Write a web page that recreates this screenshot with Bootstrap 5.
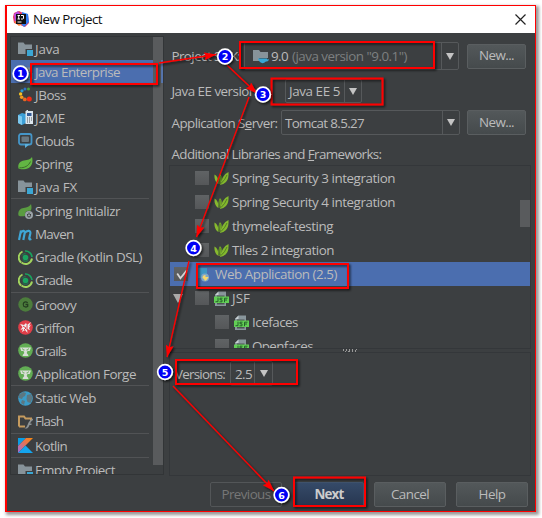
<!DOCTYPE html>
<html lang="en">
<head>
<meta charset="utf-8">
<meta name="viewport" content="width=device-width, initial-scale=1">
<title>New Project</title>
<link rel="stylesheet" href="https://cdn.jsdelivr.net/npm/bootstrap@5.3.0/dist/css/bootstrap.min.css">
<style>
body{width:542px;height:518px;overflow:hidden;background:#fff;font:13.4px/20px "Open Sans","Noto Sans",sans-serif;color:#bbb;padding:5px}
.dialog{width:531px;height:507px;border:1px solid #f00;border-left-width:2px;background:#3c3f41;box-shadow:2px 2px 3px 1px #999}
.titlebar{height:27px;background:#fff;color:#111;padding:0 9px 1px 6px}
.fit{white-space:nowrap;display:inline-block}
.sidebar{width:154px;height:439px;margin:3px 0 0 3px;border:1px solid #323537;overflow:hidden}
.types{width:143px}
.type-row{height:23px;padding-left:7px;gap:2px}
.type-row svg{width:15px;height:15px;flex:none}
.type-row.picked,.lib-row.picked{background:#4b6eaf}
.rule{height:1.6px;width:138px;background:linear-gradient(#515355 1px,transparent 1px)}
.thumb{width:10px;height:428px;background:#595b5d}
.thumb-sel{height:23px;background:#5675ad;margin-top:23px;width:2px}
.main-col{width:362px;margin:3px 0 0 5px}
.form-line{padding:0 5px 0 2.5px}
.combo{border:1px solid #56595b;border-radius:2px;background:#3c3f41}
.combo .drop{width:17px;border-left:1px solid #56595b}
.drop i{border:4.500px solid transparent;border-top:7px solid #c4c4c4;border-bottom:0}
.btn.dlg{--bs-btn-padding-x:0;--bs-btn-padding-y:0;font-size:13.4px;line-height:1;color:#bbb;border:1px solid #5a5e60;border-radius:2px;background:linear-gradient(#53585a,#454a4c);height:25px}
.btn.dlg.off{background:#3c3f41;color:#777;border-color:#535658}
.btn.dlg.main{background:linear-gradient(#354a68,#273650);border-color:#40536d;font-weight:700;color:#ccc}
.l1{width:72.5px}.l2{width:113.5px}.l3{width:109.5px}
.c1{width:215px;height:28px}.c2{width:77px;height:24px}.c3{width:179px;height:25px}
.c2 .fit,.c3 .fit{margin-left:-1px}
.line1{height:28px;margin-top:6px}.line2{height:24px;margin-top:9px}.line3{height:25px;margin-top:7px}.line4{height:20px;margin-top:9px}
.new{width:59px}
.sdk-ver{margin:0 4px 0 2px}
.text-sdk{color:#7d7f80}
.libs{height:184px;border:1px solid #34373a;overflow:hidden;margin-top:1px}
.lib-row{height:24px;gap:5px;padding-left:25px}
.lib-row svg{width:15px;height:15px;flex:none}
.lib-row>.fit{margin-left:-2px}
.lib-row.picked{padding-left:4px}
.lib-row.picked>svg{margin-left:4px}
.lib-row.deep{padding-left:45px}
.lib-row.parent{padding-left:3px}
.box{width:14px;height:14px;flex:none;background:linear-gradient(#606365,#555759)}
.twist{border:5px solid transparent;border-top:9px solid #aaa;border-bottom:0;margin-right:7px}
.lib-thumb{right:0;top:34px;width:10px;height:27px;background:#595b5d}
.grip{height:3px;width:15px;margin:0 auto;background:repeating-linear-gradient(110deg,#999 0 1px,transparent 1px 3px)}
.detail{height:124px;border:1px solid #34373a;padding:8px 0 0 5px}
.c5{width:43px;height:25px;margin-left:5px}
.c5 .drop{width:18px}
.actions{height:25px;margin-top:6px;padding-right:7px;gap:10px}
.w72{width:72px}.w70{width:70px}
.off{margin-right:2px}
.annot{position:absolute;left:0;top:0;pointer-events:none}
</style>
<script src="https://cdn.jsdelivr.net/npm/bootstrap@5.3.0/dist/js/bootstrap.bundle.min.js"></script>
</head>
<body>
<svg width="0" height="0" class="position-absolute">
<defs>
<linearGradient id="kg" x1="0" y1="1" x2="1" y2="0"><stop offset="0" stop-color="#9c6ade"/><stop offset=".6" stop-color="#e8744f"/><stop offset="1" stop-color="#f88909"/></linearGradient>
<symbol id="folder" viewBox="0 0 15 15"><path d="M0 1.500h5.500l1.500 2h7V8H7.500v5H0z" fill="#87939a"/><path d="M9 9h6v6H9z" fill="#3ba7d4"/></symbol>
<symbol id="jboss" viewBox="0 0 15 15"><circle cx="10.500" cy="2" r="1.500" fill="#4aa03c"/><circle cx="7" cy="2" r="1.500" fill="#2d72c4"/><circle cx="4" cy="3.800" r="1.600" fill="#2c9ad2"/><circle cx="2.600" cy="7" r="1.700" fill="#f5c224"/><circle cx="3.700" cy="10.300" r="1.800" fill="#f39a20"/><circle cx="6.800" cy="12.400" r="1.900" fill="#e86820"/><circle cx="11.300" cy="12" r="2.500" fill="#f32c16"/></symbol>
<symbol id="j2me" viewBox="0 0 15 15"><path d="M0 5l4-2 4 1v9l-4 2-4-2z" fill="#3c9fd6"/><path d="M0 5l4 1.500V15l-4-2z" fill="#7cc8ee"/><path d="M7.500 1h1V0H10v1h5v13H7.500z" fill="#dce6ee"/><path d="M9 3h4.500v3H9z" fill="#345b96"/><path d="M9 7.500h1v1H9zm2 0h1v1h-1zm2 0h1v1h-1zM9 9.500h1v1H9zm2 0h1v1h-1zm2 0h1v1h-1zM9 11.500h1v1H9zm2 0h1v1h-1z" fill="#555"/></symbol>
<symbol id="clouds" viewBox="0 0 15 15"><rect x="1" y="1" width="12.500" height="10.500" rx="2" fill="none" stroke="#4596c8" stroke-width="1.800"/><rect x="3.500" y="3.500" width="7.500" height="5.500" rx="1" fill="#6a7880"/><path d="M7 11v4l5-4z" fill="#5bb0dc"/></symbol>
<symbol id="spring" viewBox="0 0 15 15"><path d="M14 1c1.500 5.500-.5 11-6 12C5 13.400 2 13.500.5 12.500 -.5 8 2 5 6 4.500 10 4 12.500 3.500 14 1z" fill="#62b543"/><path d="M1.500 11.800c5 .2 9-1.800 11-6.300" stroke="#3b6d2a" fill="none"/></symbol>
<symbol id="init" viewBox="0 0 15 15"><path d="M13 0c1 4 .5 6-1 7-5-1-5 3-5 5-3 .5-5 .5-6.500-.5C-.5 7 2 4.500 5.500 4 9 3.500 12 2.500 13 0z" fill="#5a9c41"/><circle cx="11" cy="11" r="4" fill="#9aa3a8"/><path d="M9.500 10v1.500a1.500 1.500 0 003 0V10M11 8.500V11" stroke="#3c3f41" fill="none"/></symbol>
<symbol id="maven" viewBox="0 0 15 15"><path d="M1 13L3 3.500M2.700 6C4 3.500 7 3 6.700 6L5.300 13M6.800 6C8.300 3.500 13 2.500 12.300 6.500L11.300 11q-.3 2 2 1" fill="none" stroke="#3fa6d6" stroke-width="2.200"/></symbol>
<symbol id="gradle" viewBox="0 0 15 15"><path d="M4.500 1.500A6.500 6.500 0 003.200 12.500" fill="none" stroke="#a2d45e" stroke-width="1.900"/><path d="M3.500 12.500A6.500 6.500 0 0014 8.500" fill="none" stroke="#a2d45e" stroke-width="1.900"/><path d="M7 1A6.500 6.500 0 0114 7" fill="none" stroke="#19a45f" stroke-width="1.700"/><circle cx="7.500" cy="7.500" r="2.800" fill="#19a45f"/><path d="M4 5.500A4 4 0 017.500 3.500M4.500 10a4 4 0 006 0" fill="none" stroke="#178652"/></symbol>
<symbol id="groovy" viewBox="0 0 15 15"><circle cx="7.500" cy="7.500" r="7.200" fill="#4c7d3c"/><path d="M9.700 5.700Q7.500 4.200 5.800 5.700 4.500 7.500 5.800 9.300 7.800 10.700 9.700 9.300V7.500H7.500" fill="none" stroke="#243d20" stroke-width="1.300"/></symbol>
<symbol id="griffon" viewBox="0 0 15 15"><circle cx="7.500" cy="7.500" r="7.300" fill="#df3e48"/><path d="M2 4l4 1 2-2 1 2 4-3-2 4 2-1-2 3 1 2-3-1 .5 4-2.500-3-3 2 1-3-2.500 1 2-3z" fill="#eee"/><path d="M5 6l3 2-2 2M9 5v5" stroke="#df3e48" fill="none"/></symbol>
<symbol id="grails" viewBox="0 0 15 15"><circle cx="7.500" cy="7.500" r="7.300" fill="#62ad54"/><path d="M2 4.500h11L11.700 8H9.500L8.700 10l1.600 2v1H4.700v-1l1.600-2L5.500 8H3.300z" fill="#d8ddd6"/><path d="M4.500 5.500q.5 2 2 1.500M10.500 5.500q-.5 2-2 1.500" stroke="#62ad54" fill="none"/></symbol>
<symbol id="globe" viewBox="0 0 15 15"><circle cx="7.500" cy="7.500" r="7.300" fill="#3b9cc8"/><path d="M1 4l4-3 3 1-1 3-2 1-1 2-3-1zM9 4l4-1 1.500 4-2 5-3-1-1-3zM4 9l3 1-1 4-3-2z" fill="#5c7781"/></symbol>
<symbol id="flash" viewBox="0 0 15 15"><path d="M1 12.500v-10h5l1.500 2H13V7M1 12.500h6" fill="none" stroke="#c49a5e" stroke-width="2"/><path d="M15 4.500Q11 6 9.500 11 8.500 14 6.500 14.500H9Q11 13 11.500 11h2V9.500H12Q13 7 15 6z" fill="#8c9295"/></symbol>
<symbol id="kotlin" viewBox="0 0 15 15"><path d="M0 0h8L0 8z" fill="#0a9de5"/><path d="M8 0h7L0 15V8z" fill="url(#kg)"/><path d="M7.500 7.500L15 15H0z" fill="#14a5ee"/></symbol>
<symbol id="leaf" viewBox="0 0 15 15"><path d="M4.500 13C1 11 .2 7 .5 3.500q2 1 3 3.200Q4.700 9 4.500 13z" fill="#87b92f"/><path d="M5 13Q3.500 7 6 3 8.300 5 7.800 8 7 12 5 13z" fill="#75ad28"/><path d="M6 14Q6.500 10 9 6 11 2.500 14.500 1 15 8 12 11 9 14 6 14z" fill="#83b82e"/><path d="M5.400 12L6 5M7 12.500q4-3.500 6-8.500" stroke="#466f20" fill="none" stroke-width=".8"/></symbol>
<symbol id="jsf" viewBox="0 0 15 15"><path d="M4.500.5h7.500V15H1V4z" fill="#89969c"/><path d="M3 4.500h7.500v9H3z" fill="#4b5255"/><path d="M1 4L4.500.5V4z" fill="#c8d0d3"/><path d="M0 5.500h15v6.500H0z" fill="#62cf55"/><path d="M4 6.700v4H1.500M8.500 7.200H6v1.600h2v2H5.500M10.500 11.200V7.200h3M10.500 9H13" stroke="#25612b" stroke-width="1" fill="none"/></symbol>
</defs>
</svg>
<div class="dialog">
  <header class="titlebar d-flex align-items-center">
    <svg width="16" height="16" viewBox="0 0 16 16"><path d="M1 2l5-2 4 2 5 2 1 8-4 4-5-2-6-2L0 6z" fill="#f0365d"/><path d="M9 1l6 2 1 8-5 5-3-3z" fill="#2f7df4"/><path d="M1 3l4-3 3 4-6 8z" fill="#b84ae0"/><path d="M1 11l3-2 5 4-3 2z" fill="#f9803a"/><path d="M3 3h10v10H3z" fill="#111"/><path d="M4.500 4.500h2.500M5.700 4.500v3.500M4.500 8H7M8 4.500h2.500V7.500L9.500 8H8M4.500 11h4" stroke="#fff" fill="none"/></svg>
    <span class="fit ps-1 me-auto" data-w="69"><span class="ps-1 d-none"></span>New Project</span>
    <svg width="11" height="11" viewBox="0 0 11 11"><path d="M.5.5l10 10m0-10l-10 10" stroke="#222" stroke-width="1.200"/></svg>
  </header>
  <div class="d-flex">
    <aside class="sidebar d-flex">
      <div class="types">
        <div class="type-row d-flex align-items-center"><svg><use href="#folder"/></svg><span class="fit" data-w="24.5">Java</span></div>
        <div class="type-row picked d-flex align-items-center"><svg><use href="#folder"/></svg><span class="fit" data-w="85">Java Enterprise</span></div>
        <div class="type-row d-flex align-items-center"><svg><use href="#jboss"/></svg><span class="fit" data-w="31">JBoss</span></div>
        <div class="type-row d-flex align-items-center"><svg><use href="#j2me"/></svg><span class="fit" data-w="30">J2ME</span></div>
        <div class="type-row d-flex align-items-center"><svg><use href="#clouds"/></svg><span class="fit" data-w="39">Clouds</span></div>
        <div class="type-row d-flex align-items-center"><svg><use href="#spring"/></svg><span class="fit" data-w="37">Spring</span></div>
        <div class="type-row d-flex align-items-center"><svg><use href="#folder"/></svg><span class="fit" data-w="42">Java FX</span></div>
        <div class="rule"></div>
        <div class="type-row d-flex align-items-center"><svg><use href="#init"/></svg><span class="fit" data-w="85">Spring Initializr</span></div>
        <div class="type-row d-flex align-items-center"><svg><use href="#maven"/></svg><span class="fit" data-w="38.5">Maven</span></div>
        <div class="type-row d-flex align-items-center"><svg><use href="#gradle"/></svg><span class="fit" data-w="107">Gradle (Kotlin DSL)</span></div>
        <div class="type-row d-flex align-items-center"><svg><use href="#gradle"/></svg><span class="fit" data-w="37">Gradle</span></div>
        <div class="rule"></div>
        <div class="type-row d-flex align-items-center"><svg><use href="#groovy"/></svg><span class="fit" data-w="41">Groovy</span></div>
        <div class="type-row d-flex align-items-center"><svg><use href="#griffon"/></svg><span class="fit" data-w="39">Griffon</span></div>
        <div class="type-row d-flex align-items-center"><svg><use href="#grails"/></svg><span class="fit" data-w="31">Grails</span></div>
        <div class="type-row d-flex align-items-center"><svg><use href="#grails"/></svg><span class="fit" data-w="101">Application Forge</span></div>
        <div class="rule"></div>
        <div class="type-row d-flex align-items-center"><svg><use href="#globe"/></svg><span class="fit" data-w="61">Static Web</span></div>
        <div class="type-row d-flex align-items-center"><svg><use href="#flash"/></svg><span class="fit" data-w="28">Flash</span></div>
        <div class="rule"></div>
        <div class="type-row d-flex align-items-center"><svg><use href="#kotlin"/></svg><span class="fit" data-w="32">Kotlin</span></div>
        <div class="rule"></div>
        <div class="type-row d-flex align-items-center"><svg><use href="#folder"/></svg><span class="fit" data-w="80">Empty Project</span></div>
      </div>
      <div class="thumb d-flex justify-content-end"><div class="thumb-sel"></div></div>
    </aside>
    <main class="main-col">
      <div class="form-line line1 d-flex align-items-center">
        <div class="l1"><span class="fit" data-w="69">Project SDK:</span></div>
        <div class="combo c1 d-flex align-items-stretch">
          <div class="flex-grow-1 d-flex align-items-center ps-2">
            <svg width="16" height="15" viewBox="0 0 16 15"><path d="M0 1h6l1.500 2H15v6H6l1.500 3H0z" fill="#87939a"/><path d="M5 9.500h9q0 1.500 2 .5-.5 3-3 2.500Q9 16 6 12z" fill="#38a7d4"/></svg>
            <span class="fit sdk-ver" data-w="17">9.0</span><span class="fit text-sdk" data-w="115">(java version "9.0.1")</span>
          </div>
          <div class="drop d-flex align-items-center justify-content-center"><i></i></div>
        </div>
        <button class="btn dlg new ms-auto"><span class="fit" data-w="35">New...</span></button>
      </div>
      <div class="form-line line2 d-flex align-items-center">
        <div class="l2"><span class="fit" data-w="88">Java EE version:</span></div>
        <div class="combo c2 d-flex align-items-stretch">
          <div class="flex-grow-1 d-flex align-items-center ps-1"><span class="fit" data-w="51">Java EE 5</span></div>
          <div class="drop d-flex align-items-center justify-content-center"><i></i></div>
        </div>
      </div>
      <div class="form-line line3 d-flex align-items-center">
        <div class="l3"><span class="fit" data-w="106">Application S<u>e</u>rver:</span></div>
        <div class="combo c3 d-flex align-items-stretch">
          <div class="flex-grow-1 d-flex align-items-center ps-1"><span class="fit" data-w="79">Tomcat 8.5.27</span></div>
          <div class="drop d-flex align-items-center justify-content-center"><i></i></div>
        </div>
        <button class="btn dlg new ms-auto"><span class="fit" data-w="35">New...</span></button>
      </div>
      <div class="form-line line4 d-flex align-items-center"><span class="fit" data-w="210">Additional Libraries and <u>F</u>rameworks:</span></div>
      <div class="libs position-relative">
        <div class="lib-row d-flex align-items-center"><span class="box"></span><svg><use href="#leaf"/></svg><span class="fit" data-w="163">Spring Security 3 integration</span></div>
        <div class="lib-row d-flex align-items-center"><span class="box"></span><svg><use href="#leaf"/></svg><span class="fit" data-w="163">Spring Security 4 integration</span></div>
        <div class="lib-row d-flex align-items-center"><span class="box"></span><svg><use href="#leaf"/></svg><span class="fit" data-w="101">thymeleaf-testing</span></div>
        <div class="lib-row d-flex align-items-center"><span class="box"></span><svg><use href="#leaf"/></svg><span class="fit" data-w="102">Tiles 2 integration</span></div>
        <div class="lib-row picked d-flex align-items-center"><span class="box d-flex"><svg viewBox="0 0 14 14"><path d="M3 6l3 4.500L12 3" stroke="#d5d5d5" stroke-width="1.700" fill="none"/></svg></span><svg viewBox="0 0 15 15"><path d="M1 1h9v10H1z" fill="#3e97c4"/><circle cx="8" cy="10.500" r="4" fill="#7fa7c6"/><path d="M5.500 11q0-3 3-3v2h3l-1.500 2.500-2 1.500-1-2z" fill="#f5d76c"/></svg><span class="fit" data-w="122">Web Application (2.5)</span></div>
        <div class="lib-row parent d-flex align-items-center"><span class="twist"></span><span class="box"></span><svg><use href="#jsf"/></svg><span class="fit" data-w="18">JSF</span></div>
        <div class="lib-row deep d-flex align-items-center"><span class="box"></span><svg><use href="#jsf"/></svg><span class="fit" data-w="46">Icefaces</span></div>
        <div class="lib-row deep d-flex align-items-center"><span class="box"></span><svg><use href="#jsf"/></svg><span class="fit" data-w="61">Openfaces</span></div>
        <div class="lib-thumb position-absolute"></div>
      </div>
      <div class="grip"></div>
      <div class="detail">
        <div class="d-flex align-items-center"><span class="fit" data-w="50">Versions:</span>
          <div class="combo c5 d-flex align-items-stretch">
            <div class="flex-grow-1 d-flex align-items-center ps-1"><span class="fit" data-w="17">2.5</span></div>
            <div class="drop d-flex align-items-center justify-content-center"><i></i></div>
          </div>
        </div>
      </div>
    </main>
  </div>
  <footer class="actions d-flex justify-content-end">
    <button class="btn dlg off w72"><span class="fit" data-w="49">Previous</span></button>
    <button class="btn dlg main w70"><span class="fit" data-w="29">Next</span></button>
    <button class="btn dlg w72"><span class="fit" data-w="38">Cancel</span></button>
    <button class="btn dlg w72"><span class="fit" data-w="27">Help</span></button>
  </footer>
</div>
<svg class="annot" width="542" height="518" viewBox="0 0 542 518">
  <defs>
    <filter id="sh" x="0" y="0" width="542" height="518" filterUnits="userSpaceOnUse"><feDropShadow dx="1.500" dy="1.500" stdDeviation="1" flood-color="#000" flood-opacity=".7"/></filter>
    <marker id="tip" markerUnits="userSpaceOnUse" markerWidth="13" markerHeight="8" refX="12" refY="4" orient="auto"><path d="M0 0l12 4L0 8l2-4z" fill="#f00"/></marker>
  </defs>
  <g filter="url(#sh)" fill="none" stroke="#f00" stroke-width="2">
    <rect x="31" y="64" width="126" height="20"/>
    <rect x="240" y="42" width="194" height="26"/>
    <rect x="271.500" y="78.500" width="111" height="26"/>
    <rect x="197" y="264" width="151" height="24"/>
    <rect x="176" y="360" width="121" height="24"/>
    <rect x="294" y="477.500" width="71" height="28.500"/>
    <g stroke-width="1.300">
      <path d="M159 63L216 54.500" marker-end="url(#tip)"/>
      <path d="M227 65L257 93.500" marker-end="url(#tip)"/>
      <path d="M249 97L196.500 237" marker-end="url(#tip)"/>
      <path d="M189 261L167 357" marker-end="url(#tip)"/>
      <path d="M173 386L274 491" marker-end="url(#tip)"/>
    </g>
  </g>
  <g fill="#0000f5" stroke="#fff" stroke-width="1.700" filter="url(#sh)">
    <circle cx="20.500" cy="73.500" r="7.300"/><circle cx="225" cy="56.500" r="7.300"/><circle cx="263" cy="94.500" r="7.300"/><circle cx="193.500" cy="248" r="7.300"/><circle cx="165" cy="372" r="7.300"/><circle cx="281.500" cy="495" r="7.300"/>
  </g>
  <g fill="#fff" font-family="DejaVu Sans" font-weight="700" font-size="9.500" text-anchor="middle">
    <text x="20.500" y="77">1</text><text x="225" y="60">2</text><text x="263" y="98">3</text><text x="193.500" y="251.500">4</text><text x="165" y="375.500">5</text><text x="281.500" y="498.500">6</text>
  </g>
</svg>
<script>
// Tighten tracking so each label occupies its nominal width
document.querySelectorAll('.fit').forEach(function(el){
  var r=document.createRange();r.selectNodeContents(el);
  var w=r.getBoundingClientRect().width;
  el.style.letterSpacing=((el.dataset.w-w)/el.textContent.length).toFixed(3)+'px';
});
</script>
</body>
</html>
